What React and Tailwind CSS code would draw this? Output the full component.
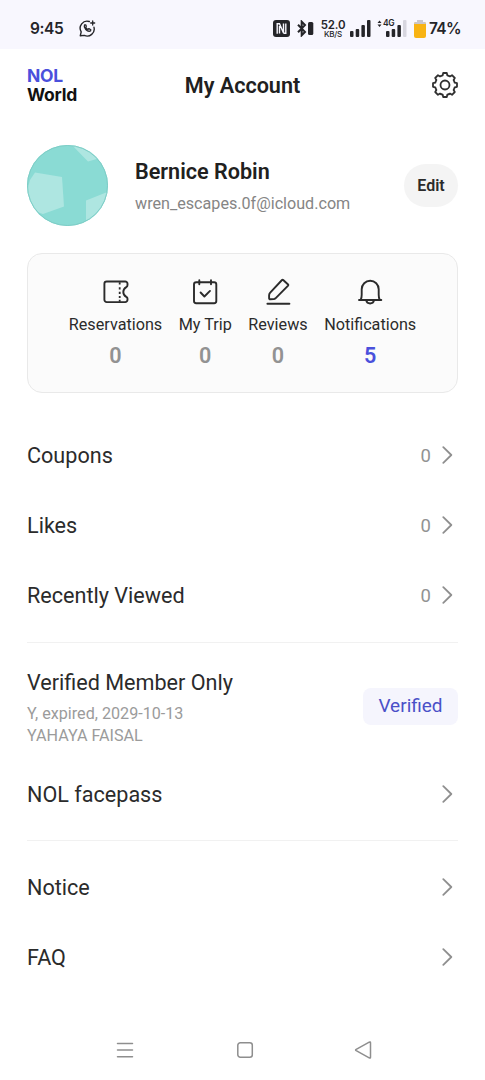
const stroke = {
  fill: 'none',
  stroke: 'currentColor',
  strokeLinecap: 'round',
  strokeLinejoin: 'round',
};

const TicketIcon = () => (
  <svg width="30" height="30" viewBox="0 0 30 30" strokeWidth="1.9" {...stroke}>
    <path d="M26.500 8V6.800a2.300 2.300 0 0 0-2.300-2.300H5.700A2.300 2.300 0 0 0 3.400 6.800v16a2.300 2.300 0 0 0 2.300 2.300h18.500a2.300 2.300 0 0 0 2.300-2.300v-1q0-1.300-1.200-1.900-3-1.700-3-4.900t3-4.900Q26.500 9.400 26.500 8z" />
    <path d="M18.700 5.200v2.400M18.700 10.300v2.300M18.700 14.700v2.300M18.700 19v2M18.700 22.800v2" strokeWidth="1.800" strokeLinecap="butt" />
  </svg>
);

const CalendarIcon = () => (
  <svg width="30" height="30" viewBox="0 0 30 30" strokeWidth="1.9" {...stroke}>
    <rect x="4" y="5.300" width="22.300" height="21" rx="2.200" />
    <path d="M9.300 3.300v4M21 3.300v4M10.600 15.500l3.800 4 5.600-5.600" />
  </svg>
);

const PencilIcon = () => (
  <svg width="30" height="30" viewBox="0 0 30 30" strokeWidth="1.9" {...stroke}>
    <path d="M4.400 26.700h22" />
    <path d="M20.200 3l4.900 4.500a.8.8 0 0 1 0 1.100L12.500 21.300a3 3 0 0 1-1.800.8l-3.500.2a1.100 1.100 0 0 1-1.100-1.100v-2.900a4 4 0 0 1 1.100-2.700L19 3a.9.9 0 0 1 1.200 0z" />
  </svg>
);

const BellIcon = () => (
  <svg width="30" height="30" viewBox="0 0 30 30" strokeWidth="1.9" {...stroke}>
    <path d="M4 23h22.300" />
    <path d="M5.700 22.800q1-2 1-5v-5.500a8.500 8.500 0 0 1 17 0v5.500q0 3 1 5" />
    <path d="M11.200 23.400a4 4 0 0 0 7.800 0" />
  </svg>
);

const GearIcon = () => (
  <svg width="28" height="28" viewBox="0 0 28 28" strokeWidth="1.800" className="text-[#303030]" {...stroke}>
    <circle cx="14" cy="14" r="4.500" />
    <path d="M11.700 4.300L12.200 2h3.600l.5 2.300a10 10 0 0 1 2.700 1.100L21 4.200 23.800 7l-1.200 2a10 10 0 0 1 1.100 2.700l2.300.5v3.600l-2.300.5a10 10 0 0 1-1.100 2.700l1.200 2-2.800 2.800-2-1.200a10 10 0 0 1-2.700 1.100l-.5 2.300h-3.600l-.5-2.300A10 10 0 0 1 9 22.600l-2 1.200L4.200 21l1.200-2a10 10 0 0 1-1.100-2.700L2 15.800v-3.600l2.300-.5A10 10 0 0 1 5.400 9l-1.200-2L7 4.200l2 1.200a10 10 0 0 1 2.700-1.100z" />
  </svg>
);

const Chevron = () => (
  <svg width="11" height="18" viewBox="0 0 11 18" strokeWidth="1.800" className="text-[#8f8f8f]" {...stroke}>
    <path d="M1.300 1.200l8 7.800-8 7.800" />
  </svg>
);

const Avatar = () => (
  <svg width="81" height="81" viewBox="0 0 81 81" className="shrink-0">
    <clipPath id="avatar">
      <circle cx="40.500" cy="40.500" r="40.500" />
    </clipPath>
    <g clipPath="url(#avatar)">
      <rect width="81" height="81" fill="#8adbd4" />
      <path d="M8 27.500l27 4.500 2 29.500L16 69-4 62 3 35z" fill="#aee6e1" />
      <path d="M43-2l18 18.500 14-4L64-2z" fill="#aee6e1" />
      <path d="M59 55.500L83 46v35H59z" fill="#aee6e1" />
    </g>
    <circle cx="40.500" cy="40.500" r="40" fill="none" stroke="#7ecdc6" strokeWidth="1" />
  </svg>
);

const SignalBars = ({ weak }) => (
  <svg width="21" height="17" viewBox="0 0 21 17" fill="#252529">
    <rect x="0" y="11" width="3.500" height="6" rx="1" />
    <rect x="5.700" y="9" width="3.500" height="8" rx="1" />
    <rect x="11.400" y="5" width="3.500" height="12" rx="1" />
    <rect x="17" y="0" width="3.500" height="17" rx="1" fill={weak ? '#d7d6df' : '#252529'} />
  </svg>
);

const StatusBar = () => (
  <div className="flex h-[49px] items-center bg-[#f8f7fe] pt-[8px] pl-[30px] text-[#252529]">
    <span className="w-[49px] font-[Inter] text-[15.500px] font-semibold tracking-[-0.400px]">9:45</span>
    <svg width="17" height="17" viewBox="0 0 17 17" strokeWidth="1.400" {...stroke}>
      <path d="M10.300 1.500A7 7 0 0 0 2.200 11.800L1.300 15.700l4-.3A7 7 0 0 0 15 7.300" />
      <path d="M5.500 4.800c-1.300 3 2.700 7.400 6 6.200l.3-1.300-1.900-1.100-1 .8C7.500 9 6.900 8 6.800 7.200l.5-.9-.6-1.500zM13.700 1v4M11.700 3h4" strokeWidth="1.300" />
    </svg>
    <div className="ml-[177px] flex items-center">
      <svg width="17" height="17" viewBox="0 0 17 17">
        <rect width="17" height="17" rx="3" fill="#252529" />
        <path d="M4.200 13.800V3.700h2.300l4 9.300V3.500M6.500 6v7.500M10.500 13.300h2.300V3.500" fill="none" stroke="#f8f7fe" strokeWidth="1.400" />
      </svg>
      <svg width="17" height="17" viewBox="0 0 17 17" className="ml-[7px]">
        <path d="M1 4.700l7 7.200-3.300 3.400V1.700L8 5.100l-7 7.200" fill="none" stroke="#252529" strokeWidth="2" />
        <rect x="11" y="2" width="5.300" height="13" rx="1.500" fill="#252529" />
      </svg>
      <div className="ml-[6px] flex w-[26px] flex-col items-center font-[Inter]">
        <span className="text-[11.500px] leading-[10px] font-semibold tracking-[-0.200px]">52.0</span>
        <span className="text-[8px] leading-[8px] font-medium tracking-[-0.200px]">KB/S</span>
      </div>
      <div className="ml-[4px]">
        <SignalBars />
      </div>
      <div className="relative ml-[15px]">
        <SignalBars weak />
        <span className="absolute -top-[1px] -left-[3px] font-[Inter] text-[8.500px] leading-[9px] font-semibold tracking-[-0.300px]">4G</span>
        <svg width="5" height="8" viewBox="0 0 5 8" className="absolute top-0 -left-[9px]" fill="#252529">
          <path d="M.5 3L2.500.5 4.500 3zM.5 4.500h4L2.500 7z" />
        </svg>
      </div>
      <svg width="12" height="18" viewBox="0 0 12 18" className="ml-[7px]">
        <path d="M3 0h6v3H3z" fill="#c9c6cc" />
        <rect x="0" y="2" width="12" height="16" rx="2" fill="#f8b313" />
        <path d="M0 4a2 2 0 0 1 2-2h8a2 2 0 0 1 2 2z" fill="#c9c6cc" />
      </svg>
      <span className="ml-[3px] font-[Inter] text-[15.500px] font-semibold tracking-[-0.700px]">74%</span>
    </div>
  </div>
);

const stats = [
  { name: 'Reservations', count: 0, icon: TicketIcon },
  { name: 'My Trip', count: 0, icon: CalendarIcon },
  { name: 'Reviews', count: 0, icon: PencilIcon },
  { name: 'Notifications', count: 5, icon: BellIcon },
];

const MenuRow = ({ label, count }) => (
  <div className="flex h-[70px] items-center justify-between pr-[5px]">
    <span className="pt-[2px] text-[21.600px] leading-[32px]">{label}</span>
    <div className="flex items-center gap-[11px]">
      {count !== undefined && <span className="pt-[2px] text-[18.500px] leading-[28px] text-[#929292]">{count}</span>}
      <Chevron />
    </div>
  </div>
);

export default function App() {
  return (
    <div className="flex h-[1080px] w-[485px] flex-col overflow-hidden bg-white font-[Roboto,sans-serif] text-[#2b2b2b]">
      <StatusBar />

      <header className="grid h-[71px] grid-cols-[1fr_auto_1fr] items-center px-[27px]">
        <div className="flex flex-col font-[Inter] font-bold">
          <span className="text-[17.500px] leading-[19px] tracking-[-0.300px] text-[#4a50dc]">NOL</span>
          <span className="text-[17.500px] leading-[19px] tracking-[-0.200px] text-[#111]">World</span>
        </div>
        <h1 className="pt-[2px] text-[21.600px] leading-[32px] font-semibold text-[#202020]">My Account</h1>
        <div className="-mr-[1px] justify-self-end">
          <GearIcon />
        </div>
      </header>

      <main className="flex flex-col px-[27px]">
        <section className="mt-[25px] flex h-[81px] items-center">
          <Avatar />
          <div className="ml-[27px] flex-1 pt-[2px]">
            <h2 className="text-[21.600px] leading-[28px] font-semibold text-[#202020]">Bernice Robin</h2>
            <p className="mt-[6px] text-[16.150px] leading-[24px] text-[#858585]">wren_escapes.0f@icloud.com</p>
          </div>
          <button className="h-[43px] w-[54px] rounded-full bg-[#f4f4f4] text-[16px] font-semibold">Edit</button>
        </section>

        <section className="mt-[27px] flex h-[140px] justify-center gap-[16.500px] rounded-[15px] border border-[#e9e9e9] bg-[#fbfbfb] pt-[23px]">
          {stats.map(({ name, count, icon: Icon }) => (
            <div key={name} className="flex flex-col items-center">
              <Icon />
              <span className="mt-[6px] text-[16.200px] leading-[24px]">{name}</span>
              <span className={count ? 'mt-[5px] text-[21.600px] leading-[28px] font-semibold text-[#4a50dc]' : 'mt-[5px] text-[21.600px] leading-[28px] font-semibold text-[#929292]'}>
                {count}
              </span>
            </div>
          ))}
        </section>

        <nav className="mt-[27px] border-b border-[#f1f1f1] pb-[12px]">
          <MenuRow label="Coupons" count={0} />
          <MenuRow label="Likes" count={0} />
          <MenuRow label="Recently Viewed" count={0} />
        </nav>

        <section className="border-b border-[#f1f1f1] pb-[11px]">
          <div className="flex h-[116px] justify-between pt-[25px]">
            <div className="pt-[1px]">
              <p className="text-[21.600px] leading-[28px]">Verified Member Only</p>
              <p className="mt-[6px] text-[16.150px] leading-[21.500px] text-[#9b9b9b]">
                Y, expired, 2029-10-13
                <br />
                YAHAYA FAISAL
              </p>
            </div>
            <span className="mt-[20px] flex h-[37px] w-[95px] items-center justify-center rounded-[8px] bg-[#f5f5fd] text-[19px] text-[#4a50c8]">
              Verified
            </span>
          </div>
          <MenuRow label="NOL facepass" />
        </section>

        <nav className="pt-[11px]">
          <MenuRow label="Notice" />
          <MenuRow label="FAQ" />
        </nav>
      </main>

      <footer className="mt-auto mb-[21px] flex items-center pl-[116px] text-[#8e8e8e]">
        <svg width="18" height="18" viewBox="0 0 18 18" strokeWidth="1.500" {...stroke}>
          <path d="M1.500 2.500h15M1.500 9h15M1.500 15.700h15" />
        </svg>
        <svg width="18" height="18" viewBox="0 0 18 18" strokeWidth="1.500" className="ml-[102px]" {...stroke}>
          <rect x="1.800" y="1.800" width="14.500" height="14.500" rx="2.500" />
        </svg>
        <svg width="18" height="18" viewBox="0 0 18 18" strokeWidth="1.500" className="ml-[100px]" {...stroke}>
          <path d="M15.200 1.200q1.300-.6 1.300.6v14.400q0 1.200-1.300.6L2.200 9.700q-1.200-.7 0-1.400z" />
        </svg>
      </footer>
    </div>
  );
}
